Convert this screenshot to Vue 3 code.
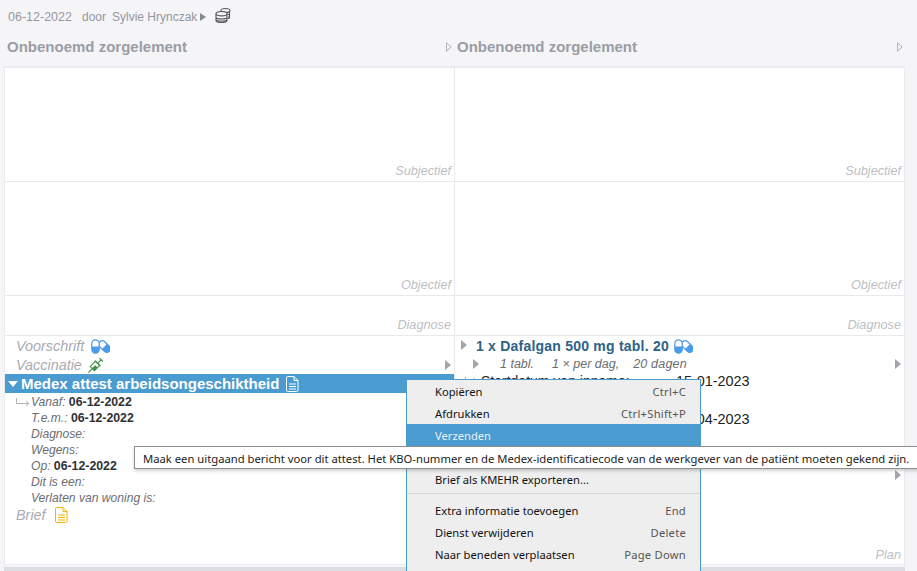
<template>
  <div class="page">
    <div class="meta">
      <span class="date">06-12-2022</span>
      <span class="door">door</span>
      <span class="author">Sylvie Hrynczak</span>
      <span class="tri-dark"></span>
      <svg class="coins" width="16" height="16" viewBox="0 0 16 16" fill="none" stroke="#555" stroke-width="1.1">
        <ellipse cx="10.500" cy="3.500" rx="4.500" ry="2" />
        <path d="M14.500 4v6.500q0 1-1.500 1.300M14.500 6.500q0 1-1.500 1.300M14.500 9q0 1-1.500 1.300" />
        <ellipse cx="6.500" cy="6.700" rx="5.500" ry="2.200" fill="#f5f5f8" />
        <path d="M1 7v6.500q0 2 5.500 2t5.500-2V7M1 10q0 2 5.500 2t5.500-2M1 12.500q0 1.500 5.500 1.500t5.500-1.500" />
      </svg>
    </div>

    <div class="titles">
      <div class="title-left">
        <h2>Onbenoemd zorgelement</h2>
        <svg width="6" height="10" viewBox="0 0 6 10"><path d="M.5.800L5.200 5 .5 9.200z" fill="#f5f5f8" stroke="#b0b2b8" /></svg>
      </div>
      <div class="title-right">
        <h2>Onbenoemd zorgelement</h2>
        <svg width="6" height="10" viewBox="0 0 6 10"><path d="M.5.800L5.200 5 .5 9.200z" fill="#f5f5f8" stroke="#b0b2b8" /></svg>
      </div>
    </div>

    <div class="sheet">
      <div class="row" v-for="r in soaRows" :key="r.label" :class="r.cls">
        <div class="cell"><em>{{ r.label }}</em></div>
        <div class="cell"><em>{{ r.label }}</em></div>
      </div>

      <div class="row row-plan">
        <div class="cell plan-left">
          <div class="plan-line script">
            <span class="cat">Voorschrift</span>
            <svg width="19" height="15" viewBox="0 0 19 15"><use href="#pills" /></svg>
          </div>
          <div class="plan-line vacc">
            <span class="cat">Vaccinatie</span>
            <svg width="15" height="15" viewBox="0 0 15 15" fill="none" stroke="#3f9142">
              <g transform="rotate(-45 7.500 7.500)">
                <path d="M-2.500 7.500H3" stroke-width="1.200" />
                <rect x="3" y="4.500" width="7.500" height="6" fill="#fff" />
                <rect x="3" y="7" width="4.500" height="3.500" fill="#3f9142" stroke="none" />
                <path d="M10.500 3.500v8M10.500 7.500h5M15.500 5v5" stroke-width="1.200" />
              </g>
            </svg>
            <span class="tri-gray end"></span>
          </div>
          <div class="selected">
            <span class="tri-down"></span>
            <strong>Medex attest arbeidsongeschiktheid</strong>
            <svg width="13" height="16" viewBox="0 0 13 16" fill="none" stroke="#fff" stroke-width="1">
              <path d="M1.500.5h6.500l4 4v9.500q0 1.500-1.500 1.500h-9q-1 0-1-1.500v-12q0-1.500 1-1.500zM8 .5v4h4M3 8h7M3 10.500h7M3 13h7" />
            </svg>
          </div>
          <div class="details">
            <svg class="hook" width="14" height="8" viewBox="0 0 14 8" fill="none" stroke="#b0b0b0">
              <path d="M.5 0v5.500h12M10 3l3 2.500-3 2.500" />
            </svg>
            <p v-for="d in details" :key="d.label"><i>{{ d.label }}</i> <b v-if="d.value">{{ d.value }}</b></p>
          </div>
          <div class="plan-line brief">
            <span class="cat">Brief</span>
            <svg width="13" height="16" viewBox="0 0 13 16" fill="none" stroke="#f4b400" stroke-width="1">
              <path d="M1.500.5h6.500l4 4v9.500q0 1.500-1.500 1.500h-9q-1 0-1-1.500v-12q0-1.500 1-1.500zM8 .5v4h4M3 8h7M3 10.500h7M3 13h7" />
            </svg>
          </div>
        </div>

        <div class="cell plan-right">
          <div class="drug">
            <span class="tri-gray up"></span>
            <strong>1 x Dafalgan 500 mg tabl. 20</strong>
            <svg width="19" height="15" viewBox="0 0 19 15"><use href="#pills" /></svg>
          </div>
          <div class="dose">
            <span class="tri-gray"></span>
            <i class="d1">1 tabl.</i>
            <i class="d2">1 × per dag,</i>
            <i class="d3">20 dagen</i>
            <span class="tri-gray end"></span>
          </div>
          <div class="intake">
            <svg class="hook-r" width="16" height="8" viewBox="0 0 16 8" fill="none" stroke="#b0b0b0">
              <path d="M.5 0v6M8.500 1l4 3-4 3" />
            </svg>
            <span class="label">Startdatum van inname:</span>
            <span class="val">15-01-2023</span>
          </div>
          <div class="intake second">
            <span class="label"></span>
            <span class="val">15-04-2023</span>
          </div>
          <span class="tri-gray lone"></span>
          <em class="plan-tag">Plan</em>
        </div>
      </div>
    </div>
    <div class="hscroll"></div>

    <ul class="menu">
      <template v-for="(m, i) in menu" :key="i">
        <li v-if="m.sep" class="sep"></li>
        <li v-else :class="{ on: m.on }"><span>{{ m.text }}</span><span class="key">{{ m.key }}</span></li>
      </template>
    </ul>

    <div class="tooltip">Maak een uitgaand bericht voor dit attest. Het KBO-nummer en de Medex-identificatiecode van de werkgever van de patiënt moeten gekend zijn.</div>

    <svg width="0" height="0" class="defs">
      <defs>
        <g id="pills">
          <g transform="rotate(-45 13.500 7.500)">
            <rect x="10" y="0.800" width="7" height="13.400" rx="3.500" fill="#fff" stroke="#4d9be8" stroke-width="1.200" />
            <path d="M10 7.500h7v3.200a3.500 3.500 0 0 1-7 0z" fill="#4d9be8" />
          </g>
          <rect x="0.800" y="0.800" width="7.400" height="13.400" rx="3.700" fill="#fff" stroke="#4d9be8" stroke-width="1.200" />
          <path d="M0.800 7.500h7.400v3a3.700 3.700 0 0 1-7.400 0z" fill="#4d9be8" />
        </g>
      </defs>
    </svg>
  </div>
</template>

<script setup>
const soaRows = [
  { label: 'Subjectief', cls: 'row-s' },
  { label: 'Objectief', cls: 'row-o' },
  { label: 'Diagnose', cls: 'row-d' },
]

const details = [
  { label: 'Vanaf:', value: '06-12-2022' },
  { label: 'T.e.m.:', value: '06-12-2022' },
  { label: 'Diagnose:' },
  { label: 'Wegens:' },
  { label: 'Op:', value: '06-12-2022' },
  { label: 'Dit is een:' },
  { label: 'Verlaten van woning is:' },
]

const menu = [
  { text: 'Kopiëren', key: 'Ctrl+C' },
  { text: 'Afdrukken', key: 'Ctrl+Shift+P' },
  { text: 'Verzenden', on: true },
  { text: '' },
  { text: 'Brief als KMEHR exporteren...' },
  { sep: true },
  { text: 'Extra informatie toevoegen', key: 'End' },
  { text: 'Dienst verwijderen', key: 'Delete' },
  { text: 'Naar beneden verplaatsen', key: 'Page Down' },
]
</script>

<style>
html, body { margin: 0; height: 100%; overflow: hidden; background: #f5f5f8; }
</style>

<style scoped>
.page {
  position: relative;
  width: 917px;
  height: 571px;
  overflow: hidden;
  background: #f5f5f8;
  font-family: "Liberation Sans", Arial, sans-serif;
}
.defs { position: absolute; }

.meta {
  height: 33px;
  padding-left: 8px;
  display: flex;
  align-items: center;
  font-size: 12px;
  color: #94979e;
  box-sizing: border-box;
}
.date { font-size: 12.500px; }
.door { margin-left: 10px; }
.author { margin-left: 6px; }
.tri-dark {
  margin-left: 3px;
  border-left: 6px solid #85888f;
  border-top: 4.500px solid transparent;
  border-bottom: 4.500px solid transparent;
}
.coins { margin-left: 9px; margin-top: -3px; }

.titles { display: flex; height: 33px; padding: 0 0 6px 7px; box-sizing: border-box; }
.title-left { width: 449px; display: flex; align-items: center; justify-content: space-between; padding-right: 4px; box-sizing: border-box; }
.title-right { flex: 1; display: flex; align-items: center; justify-content: space-between; padding: 0 14px 0 1px; }
.titles h2 { margin: 0; font-size: 15px; font-weight: 700; color: #9a9da4; }

.sheet {
  margin-left: 4px;
  width: 901px;
  height: 499px;
  box-sizing: border-box;
  background: #fff;
  border: 1px solid #e9ecef;
  border-top-width: 2px;
}
.row { display: flex; border-bottom: 1px solid #e9e9ec; box-sizing: border-box; }
.row-s, .row-o { height: 114px; }
.row-d { height: 40px; }
.row-plan { height: 229px; border-bottom: 0; }
.cell {
  position: relative;
  width: 449px;
  box-sizing: border-box;
  display: flex;
  align-items: flex-end;
  justify-content: flex-end;
  padding: 0 3px 3px 0;
}
.cell + .cell { flex: 1; border-left: 1px solid #e9e9ec; }
.cell em, .plan-tag {
  font-size: 12.700px;
  color: #bdbfc4;
  font-style: italic;
}

.plan-left, .plan-right { display: block; padding: 0; }
.plan-line { display: flex; align-items: center; gap: 6px; height: 20px; padding-left: 11px; }
.plan-line.script { gap: 7px; }
.plan-line.vacc { height: 18px; padding-right: 2px; gap: 6px; }
.cat { font-size: 14.400px; font-style: italic; color: #a9abb1; }
.end { margin-left: auto; }
.tri-gray {
  flex: none;
  display: inline-block;
  width: 0; height: 0;
  border-left: 6px solid #a3a5ab;
  border-top: 5px solid transparent;
  border-bottom: 5px solid transparent;
}
.tri-gray.up { margin-top: -3px; }
.plan-line .end { margin-right: 1px; }

.selected {
  height: 19px;
  background: #4a9bd0;
  display: flex;
  align-items: center;
  color: #fff;
  padding-left: 3px;
}
.selected strong { font-size: 15px; margin-right: 7px; margin-left: 3px; }
.tri-down {
  border-top: 6px solid #fff;
  border-left: 5px solid transparent;
  border-right: 5px solid transparent;
}

.details { position: relative; padding-left: 26px; margin-top: 1px; }
.details p { margin: 0; height: 16px; line-height: 16px; font-size: 12px; color: #333; white-space: nowrap; }
.details i { color: #6b6d72; font-size: 12.100px; }
.details b { color: #2f3136; font-size: 12.300px; }
.hook { position: absolute; left: 11px; top: 4px; }
.brief { height: 18px; gap: 9px; }

.drug { display: flex; align-items: center; height: 20px; padding-left: 6px; color: #2c6288; }
.drug strong { font-size: 14px; margin-left: 9px; margin-right: 5px; letter-spacing: .22px; }
.dose {
  display: flex;
  align-items: center;
  height: 15px;
  padding-left: 18px;
  padding-right: 3px;
  font-size: 12.500px;
  color: #6b6d72;
}
.d1 { margin-left: 21px; }
.d2 { margin-left: 18px; }
.d3 { margin-left: 14px; letter-spacing: .2px; }
.intake {
  display: flex;
  align-items: center;
  height: 19px;
  font-size: 14px;
  color: #222;
  padding-left: 26px;
}
.intake .label { width: 195px; }
.intake .val { font-size: 14.400px; }
.intake.second { margin-top: 19px; }
.hook-r { position: absolute; left: 10px; top: 41px; }
.lone { position: absolute; right: 3px; top: 134px; }
.plan-tag { position: absolute; right: 3px; bottom: 3px; }

.hscroll { height: 6px; margin: 2px 0 0 4px; width: 901px; background: #dcdde2; }

.menu {
  position: absolute;
  left: 406px;
  top: 379px;
  width: 295px;
  height: 200px;
  margin: 0;
  padding: 0;
  box-sizing: border-box;
  list-style: none;
  background: #eeeeee;
  border: 1px solid #4a9bd0;
  border-bottom: 0;
  font-family: "Noto Sans", "Open Sans", sans-serif;
  font-size: 11.200px;
  color: #111;
}
.menu li {
  height: 22px;
  padding: 0 14px 0 28px;
  display: flex;
  align-items: center;
  justify-content: space-between;
}
.menu li.on { background: #4a9bd0; color: #e8f2f9; }
.menu li.sep {
  height: 1px;
  margin: 3px 0 5px;
  padding: 0;
  background: #d6d6d6;
}
.key { color: #555; letter-spacing: .25px; }

.tooltip {
  position: absolute;
  left: 134px;
  top: 446px;
  width: 800px;
  height: 23px;
  box-sizing: border-box;
  padding: 0 8px;
  line-height: 23px;
  background: #fff;
  border: 1px solid #8f8f8f;
  box-shadow: 0 2px 3px rgba(0,0,0,.18);
  font-family: "Noto Sans", "Open Sans", sans-serif;
  font-size: 11.260px;
  color: #222;
  white-space: nowrap;
}
</style>
